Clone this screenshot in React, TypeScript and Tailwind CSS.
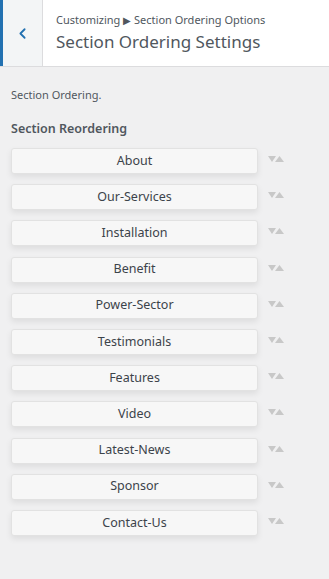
import { ChevronLeft } from "lucide-react";

const sections = [
  "About",
  "Our-Services",
  "Installation",
  "Benefit",
  "Power-Sector",
  "Testimonials",
  "Features",
  "Video",
  "Latest-News",
  "Sponsor",
  "Contact-Us",
];

function Arrows() {
  return (
    <div className="flex items-center pt-[1px]">
      <svg width="8" height="6" viewBox="0 0 8 6" className="fill-[#c8c8c8]">
        <polygon points="0,0 8,0 4,6" />
      </svg>
      <svg width="9" height="6" viewBox="0 0 9 6" className="-ml-[1px] fill-[#c8c8c8]">
        <polygon points="4.5,0 9,6 0,6" />
      </svg>
    </div>
  );
}

export default function App() {
  return (
    <div className="min-h-[579px] w-[329px] bg-[#f0f0f1] font-['Noto_Sans',sans-serif] text-[#50575e]">
      <div className="flex h-[67px] border-b border-[#dcdcde] bg-white">
        <div className="flex w-[43px] items-center justify-center border-l-[3px] border-r border-l-[#2271b1] border-r-[#dcdcde] bg-[#f3f5f6]">
          <ChevronLeft size={17} strokeWidth={2.5} className="text-[#2271b1]" />
        </div>
        <div className="flex flex-col justify-center pl-[13px] pb-[2px]">
          <div className="text-[11px] leading-[14px] text-[#50575e]">
            Customizing <span className="text-[10px]">▶</span> Section Ordering Options
          </div>
          <div className="mt-[5px] text-[17px] leading-[20px] text-[#50575e]">
            Section Ordering Settings
          </div>
        </div>
      </div>

      <div className="px-[11px] pt-[21px]">
        <p className="text-[11px] leading-[14px] text-[#50575e]">Section Ordering.</p>
        <h3 className="mt-[19px] text-[12.5px] font-semibold leading-[16px] text-[#50575e]">
          Section Reordering
        </h3>
        <ul className="mt-[11px] flex flex-col gap-[10.2px]">
          {sections.map((s) => (
            <li key={s} className="flex items-start gap-[10px]">
              <div className="flex h-[26px] w-[247px] items-center justify-center rounded-[3px] border border-[#e2e2e2] bg-[#f7f7f7] text-[12.5px] text-[#3c434a] shadow-[0_3px_6px_rgba(0,0,0,0.08)]">
                {s}
              </div>
              <div className="pt-[7px]">
                <Arrows />
              </div>
            </li>
          ))}
        </ul>
      </div>
    </div>
  );
}
